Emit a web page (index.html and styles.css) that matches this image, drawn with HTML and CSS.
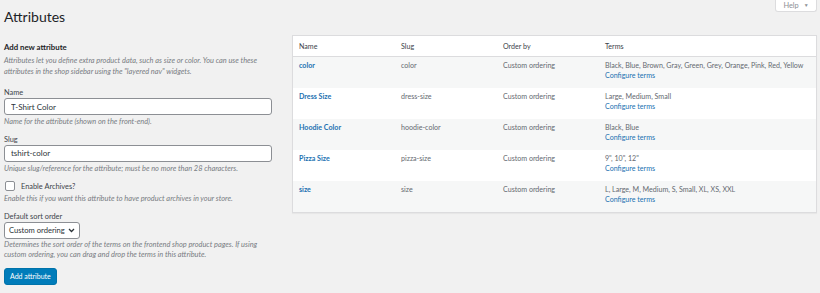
FILE: index.html
```html
<!DOCTYPE html>
<html lang="en">
<head>
  <meta charset="UTF-8" />
  <title>Attributes</title>
  <link rel="stylesheet" href="styles.css">
</head>
<body>
  <div class="help-tab">Help <span class="arrow">&#9660;</span></div>

  <h1>Attributes</h1>

  <div class="wrap">
    <div class="col-left">
      <h2>Add new attribute</h2>
      <p class="hint">Attributes let you define extra product data, such as size or color. You can use these attributes in the shop sidebar using the "layered nav" widgets.</p>

      <div class="field field-first">
        <label>Name</label>
        <input type="text" value="T-Shirt Color" />
        <p class="hint">Name for the attribute (shown on the front-end).</p>
      </div>

      <div class="field">
        <label>Slug</label>
        <input type="text" value="tshirt-color" />
        <p class="hint">Unique slug/reference for the attribute; must be no more than 28 characters.</p>
      </div>

      <div class="field">
        <label class="check"><span class="box"></span>Enable Archives?</label>
        <p class="hint">Enable this if you want this attribute to have product archives in your store.</p>
      </div>

      <div class="field">
        <label>Default sort order</label>
        <div class="select">Custom ordering
          <svg width="7" height="5" viewBox="0 0 7 5"><path d="M1 1 L3.5 3.5 L6 1" fill="none" stroke="#2c3338" stroke-width="1.3"/></svg>
        </div>
        <p class="hint">Determines the sort order of the terms on the frontend shop product pages. If using custom ordering, you can drag and drop the terms in this attribute.</p>
      </div>

      <button class="btn">Add attribute</button>
    </div>

    <div class="col-right">
      <table class="attr-table">
        <thead>
          <tr><th>Name</th><th>Slug</th><th>Order by</th><th>Terms</th></tr>
        </thead>
        <tbody>
          <tr>
            <td><a class="name">color</a></td><td>color</td><td>Custom ordering</td>
            <td>Black, Blue, Brown, Gray, Green, Grey, Orange, Pink, Red, Yellow<br><a>Configure terms</a></td>
          </tr>
          <tr>
            <td><a class="name">Dress Size</a></td><td>dress-size</td><td>Custom ordering</td>
            <td>Large, Medium, Small<br><a>Configure terms</a></td>
          </tr>
          <tr>
            <td><a class="name">Hoodie Color</a></td><td>hoodie-color</td><td>Custom ordering</td>
            <td>Black, Blue<br><a>Configure terms</a></td>
          </tr>
          <tr>
            <td><a class="name">Pizza Size</a></td><td>pizza-size</td><td>Custom ordering</td>
            <td>9", 10", 12"<br><a>Configure terms</a></td>
          </tr>
          <tr>
            <td><a class="name">size</a></td><td>size</td><td>Custom ordering</td>
            <td>L, Large, M, Medium, S, Small, XL, XS, XXL<br><a>Configure terms</a></td>
          </tr>
        </tbody>
      </table>
    </div>
  </div>
</body>
</html>
```

FILE: styles.css
```css
body {
  margin: 0;
  padding: 0 3px 0 4px;
  background: #f1f1f1;
  font-family: Lato, "Open Sans", sans-serif;
  font-size: 7.4px;
  color: #3c434a;
  position: relative;
}

.help-tab {
  position: absolute;
  top: -1px;
  right: 3px;
  width: 42px;
  height: 13px;
  box-sizing: border-box;
  background: #fff;
  border: 1px solid #dcdcde;
  border-top: none;
  border-radius: 0 0 3px 3px;
  color: #8c8f94;
  font-size: 7.4px;
  line-height: 12px;
  text-align: center;
}

.help-tab .arrow {
  font-size: 5px;
  margin-left: 3px;
  vertical-align: 1px;
}

h1 {
  margin: 0;
  padding-top: 7px;
  font-size: 14px;
  font-weight: 400;
  line-height: 20px;
  color: #1d2327;
}

.wrap {
  display: flex;
  gap: 20px;
  margin-top: 8px;
}

.col-left {
  width: 268px;
  flex-shrink: 0;
}

.col-right {
  flex-grow: 1;
}

h2 {
  margin: 6px 0 3px;
  font-size: 7.8px;
  font-weight: 700;
  line-height: 12px;
  color: #1d2327;
}

.hint {
  margin: 0;
  font-style: italic;
  color: #787c82;
  line-height: 10.5px;
}

.field {
  margin-top: 7px;
}

.field-first {
  margin-top: 11px;
}

.field label {
  display: block;
  color: #3c434a;
  line-height: 9px;
  margin-bottom: 1px;
}

.field input {
  display: block;
  width: 100%;
  height: 17px;
  box-sizing: border-box;
  margin: 0 0 2px;
  padding: 0 6px;
  border: 1px solid #8c8f94;
  border-radius: 3px;
  background: #fff;
  font-family: Lato, "Open Sans", sans-serif;
  font-size: 8px;
  color: #2c3338;
}

.field label.check {
  display: flex;
  align-items: center;
  gap: 6px;
  margin-bottom: 3px;
}

.box {
  width: 8px;
  height: 8px;
  border: 1px solid #8c8f94;
  border-radius: 2px;
  background: #fff;
  margin-left: 1px;
}

.select {
  display: inline-flex;
  align-items: center;
  gap: 3px;
  height: 17px;
  box-sizing: border-box;
  padding: 0 4px 0 4px;
  border: 1px solid #8c8f94;
  border-radius: 3px;
  background: #fff;
  font-size: 7.6px;
  color: #2c3338;
  margin-bottom: 1px;
}

.btn {
  margin-top: 7px;
  height: 17px;
  padding: 0 5px;
  border: 1px solid #0073aa;
  border-radius: 3px;
  background: #007cba;
  color: #fff;
  font-family: Lato, "Open Sans", sans-serif;
  font-size: 7px;
}

.attr-table {
  width: 100%;
  border-collapse: collapse;
  background: #fff;
  border: 1px solid #dcdcde;
  box-shadow: 0 1px 1px rgba(0, 0, 0, 0.04);
  font-size: 7.1px;
}

.attr-table th {
  text-align: left;
  font-weight: 400;
  color: #3c434a;
  height: 20px;
  padding: 0 6px;
  border-bottom: 1px solid #dcdcde;
  width: 90px;
}

.attr-table th:last-child {
  width: auto;
}

.attr-table td {
  vertical-align: top;
  padding: 4px 6px 0;
  height: 27px;
  line-height: 10px;
  color: #646970;
  white-space: nowrap;
}

.attr-table tbody tr:nth-child(odd) {
  background: #f6f7f7;
}

.attr-table a {
  color: #2271b1;
}

.attr-table a.name {
  font-weight: 700;
}
```
